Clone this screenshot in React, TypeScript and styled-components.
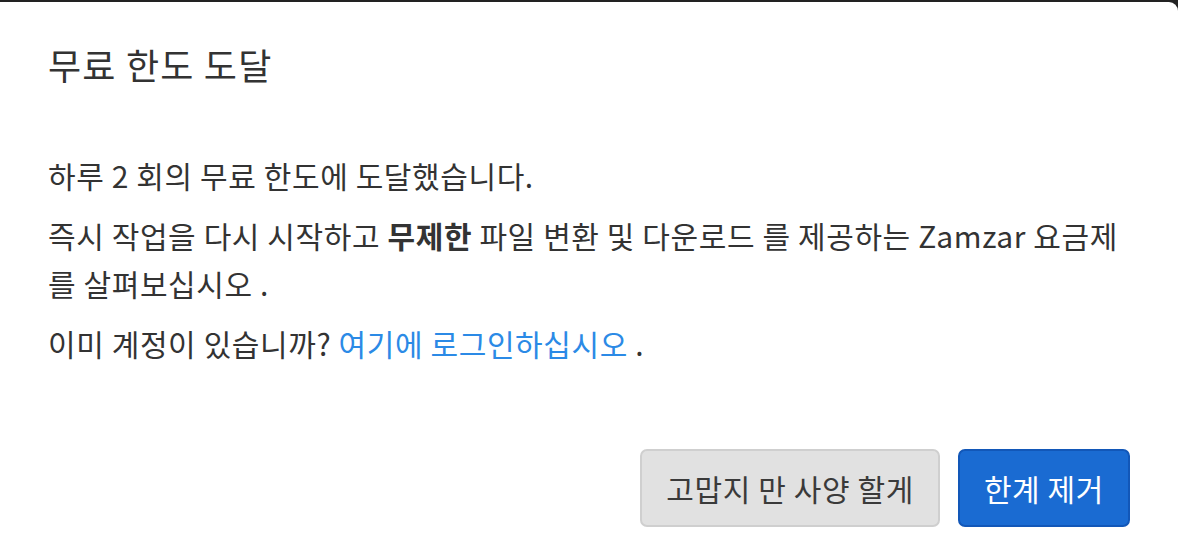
import React from "react";
import styled, { createGlobalStyle } from "styled-components";

const GlobalStyle = createGlobalStyle`
    html, body {
        margin: 0;
        padding: 0;
        background: #222222;
        overflow: hidden;
    }
    body {
        font-family: "Noto Sans CJK KR", "Noto Sans", sans-serif;
    }
`;

const Backdrop = styled.div`
    width: 1178px;
    height: 556px;
    padding-top: 2px;
    box-sizing: border-box;
`;

const Modal = styled.div`
    background: #ffffff;
    border-top-right-radius: 9px;
    height: 554px;
    color: #333333;
    display: flex;
    flex-direction: column;
`;

const Header = styled.div`
    padding: 36px 48px 0;
    height: 72px;
`;

const Title = styled.h2`
    margin: 0;
    font-size: 36px;
    font-weight: 400;
    line-height: 52px;
    letter-spacing: 1.2px;
    color: #333333;
`;

const Body = styled.div`
    padding: 41px 48px 0;
`;

const Para = styled.p`
    margin: 0 0 12px;
    font-size: 30px;
    line-height: 48px;
    letter-spacing: 0.6px;
`;

const Link = styled.a`
    color: #2b8ae6;
    text-decoration: none;
`;

const Footer = styled.div`
    display: flex;
    justify-content: flex-end;
    gap: 18px;
    padding: 70px 48px 0;
`;

const Button = styled.button<{ $primary?: boolean }>`
    font-family: inherit;
    font-size: 30px;
    letter-spacing: 0.6px;
    line-height: 40px;
    height: 78px;
    padding: 0 24px;
    border-radius: 7px;
    border: 2px solid ${(p) => (p.$primary ? "#1257b8" : "#cfcfcf")};
    background: ${(p) => (p.$primary ? "#1a6bd2" : "#e1e1e1")};
    color: ${(p) => (p.$primary ? "#ffffff" : "#3a3a3a")};
    cursor: pointer;
`;

export default function App() {
    return (
        <>
            <GlobalStyle />
            <Backdrop>
                <Modal>
                    <Header>
                        <Title>무료 한도 도달</Title>
                    </Header>
                    <Body>
                        <Para>하루 2 회의 무료 한도에 도달했습니다.</Para>
                        <Para>
                            즉시 작업을 다시 시작하고 <b>무제한</b> 파일 변환 및 다운로드 를 제공하는 Zamzar 요금제 를 살펴보십시오 .
                        </Para>
                        <Para>
                            이미 계정이 있습니까? <Link href="#">여기에 로그인하십시오</Link> .
                        </Para>
                    </Body>
                    <Footer>
                        <Button>고맙지 만 사양 할게</Button>
                        <Button $primary>한계 제거</Button>
                    </Footer>
                </Modal>
            </Backdrop>
        </>
    );
}
